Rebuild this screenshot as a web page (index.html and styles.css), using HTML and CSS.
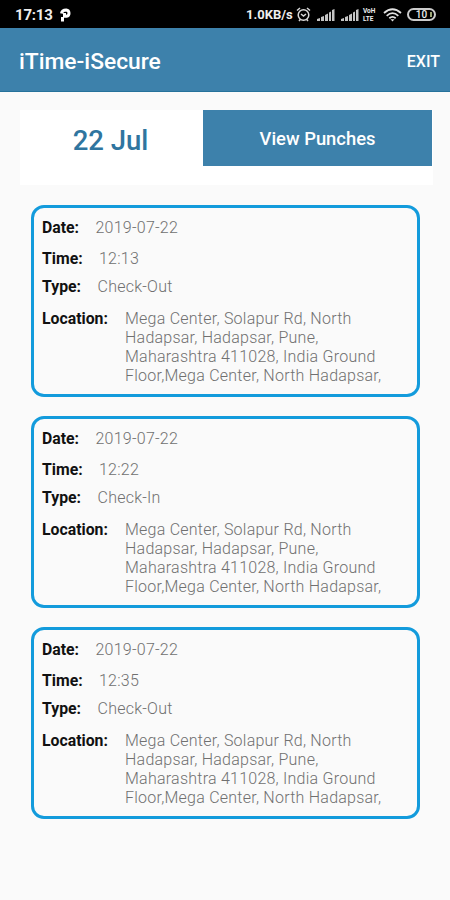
FILE: index.html
```html
<!DOCTYPE html>
<html lang="en">
<head>
<meta charset="utf-8">
<title>iTime-iSecure</title>
<link rel="stylesheet" href="styles.css">
</head>
<body>
<div class="status">
  <span class="clock">17:13</span>
  <svg class="pay" width="12" height="14" viewBox="0 0 12 14"><path d="M2.500 13.500V9M1.500 5.500Q2 2 6.200 2A3.200 3.200 0 0 1 6.500 8.300H4.500V5" fill="none" stroke="#fff" stroke-width="3"/></svg>
  <span class="rate">1.0KB/s</span>
  <svg class="alarm" width="15" height="15" viewBox="0 0 15 15" fill="none" stroke="#d8d8d8" stroke-width="1.5"><circle cx="7.5" cy="8" r="5.3"/><path d="M1 3.5L4 1M14 3.5L11 1M3 14l1.5-1.7M12 14l-1.5-1.7M5 7l2.5 2L10 7"/></svg>
  <svg class="signal" width="18" height="12" viewBox="0 0 18 12" fill="#c4c4c4"><path d="M0 12V10l3-1v3zM4 12V8l3-1v5zM8 12V6l3-1.500V12zM12 12V3.500l2-1V12zM15 12V1l2.500-1v12z"/></svg>
  <svg class="signal" width="18" height="12" viewBox="0 0 18 12" fill="#c4c4c4"><path d="M0 12V10l3-1v3zM4 12V8l3-1v5zM8 12V6l3-1.500V12zM12 12V3.500l2-1V12zM15 12V1l2.500-1v12z"/></svg>
  <span class="lte"><span>VoH</span><span>LTE</span></span>
  <svg class="wifi" width="19" height="14" viewBox="0 0 19 14" fill="none" stroke="#e2e2e2" stroke-width="1.800"><path d="M1 5Q9.500-2.500 18 5M3.700 7.800Q9.500 2.500 15.300 7.800M6.300 10.300Q9.500 7.500 12.700 10.300"/><path d="M7.500 11.300h4L9.500 13.500z" fill="#e2e2e2" stroke="none"/></svg>
  <span class="battery">10<i></i></span>
</div>
<header class="appbar"><h1>iTime-iSecure</h1><span class="exit">EXIT</span></header>
<main>
  <section class="toolbar"><div class="day">22 Jul</div><div class="view">View Punches</div></section>
  <section class="list">
    <article class="card">
      <div class="row date"><b>Date:</b><span>2019-07-22</span></div>
      <div class="row time"><b>Time:</b><span>12:13</span></div>
      <div class="row type"><b>Type:</b><span>Check-Out</span></div>
      <div class="row place"><b>Location:</b><span>Mega Center, Solapur Rd, North<br>Hadapsar, Hadapsar, Pune,<br>Maharashtra 411028, India Ground<br>Floor,Mega Center, North Hadapsar,</span></div>
    </article>
    <article class="card">
      <div class="row date"><b>Date:</b><span>2019-07-22</span></div>
      <div class="row time"><b>Time:</b><span>12:22</span></div>
      <div class="row type"><b>Type:</b><span>Check-In</span></div>
      <div class="row place"><b>Location:</b><span>Mega Center, Solapur Rd, North<br>Hadapsar, Hadapsar, Pune,<br>Maharashtra 411028, India Ground<br>Floor,Mega Center, North Hadapsar,</span></div>
    </article>
    <article class="card">
      <div class="row date"><b>Date:</b><span>2019-07-22</span></div>
      <div class="row time"><b>Time:</b><span>12:35</span></div>
      <div class="row type"><b>Type:</b><span>Check-Out</span></div>
      <div class="row place"><b>Location:</b><span>Mega Center, Solapur Rd, North<br>Hadapsar, Hadapsar, Pune,<br>Maharashtra 411028, India Ground<br>Floor,Mega Center, North Hadapsar,</span></div>
    </article>
  </section>
</main>
</body>
</html>
```
FILE: styles.css
```css
* { box-sizing: border-box; }
body { margin: 0; width: 450px; height: 900px; overflow: hidden; background: #fafafa; font-family: Roboto, sans-serif; }
.status { display: flex; align-items: center; height: 28px; padding: 1px 14px 0 15px; background: #000; color: #eee; }
.clock { width: 45px; font-size: 15px; font-weight: 700; letter-spacing: -0.2px; }
.rate { width: 50px; margin-left: auto; font-size: 13px; font-weight: 700; white-space: nowrap; }
.signal { margin-left: 6px; }
.lte { display: flex; flex-direction: column; width: 16px; margin-left: 4px; font-size: 6.5px; line-height: 8px; font-weight: 700; }
.wifi { margin-left: 4px; }
.battery { display: flex; align-items: center; justify-content: center; gap: 3px; width: 29px; height: 13px; padding-left: 5px; margin-left: 5px; border: 2px solid #ccc; border-radius: 7px; font-size: 10px; line-height: 9px; font-weight: 500; }
.battery i { width: 2px; height: 5px; background: #9ca575; }
.appbar { display: flex; align-items: center; justify-content: space-between; height: 64px; padding: 3px 10px 0 19px; background: #3d81ab; border-bottom: 1px solid #26729b; color: #fff; }
h1 { margin: 0; padding-top: 1px; font-size: 22.8px; line-height: 28px; font-weight: 500; }
.exit { font-size: 16px; font-weight: 500; }
main { padding: 18px 17px 0 20px; }
.toolbar { display: flex; height: 75px; background: #fff; }
.day { width: 181px; margin-right: 2px; padding-top: 14px; color: #2f759f; font-size: 27.5px; line-height: 34px; font-weight: 500; text-align: center; }
.view { width: 229px; height: 56px; background: #3d81ab; color: #fff; font-size: 18.4px; line-height: 57px; font-weight: 500; text-align: center; }
.list { display: grid; gap: 19px; padding: 20px 13px 0 11px; }
.card { width: 389px; height: 192px; padding: 10px 0 0 8px; border: 3px solid #139bdc; border-radius: 13px; color: #707070; font-size: 16px; line-height: 19.2px; }
.row { display: flex; font-weight: 300; letter-spacing: 0.24px; white-space: nowrap; }
.row b { color: #111; font-size: 15.8px; font-weight: 700; letter-spacing: 0; }
.date { height: 31px; }
.date b { width: 53.5px; }
.time { height: 28px; }
.time b { width: 57px; }
.type { height: 31px; }
.type b { width: 55.5px; }
.place { padding-top: 0.5px; }
.place b { width: 83px; }
```
